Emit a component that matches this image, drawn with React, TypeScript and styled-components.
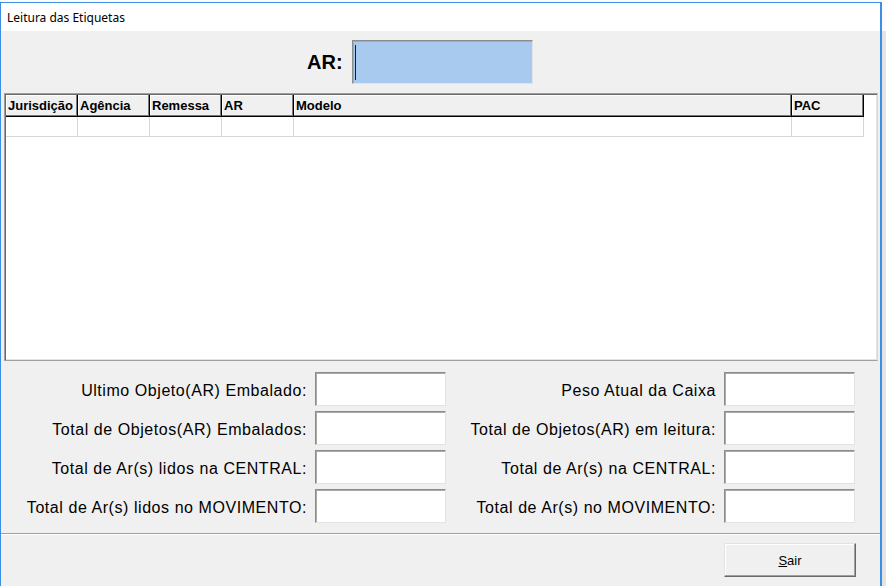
import React from 'react';
import styled, { createGlobalStyle } from 'styled-components';

const Global = createGlobalStyle`
  html, body { margin: 0; padding: 0; }
  body {
    width: 886px;
    height: 586px;
    overflow: hidden;
    background: linear-gradient(#fbfbfb 0 31px, #e4e4e4 31px);
    font-family: "Liberation Sans", Arial, sans-serif;
  }
`;

const Screen = styled.div`
  padding-top: 2px;
  height: 586px;
  box-sizing: border-box;
  overflow: hidden;
`;

const Window = styled.div`
  width: 882px;
  height: 600px;
  box-sizing: border-box;
  border-left: 1px solid #3c8fe0;
  border-top: 1px solid #3c8fe0;
  border-right: 2px solid #3c8fe0;
  background: #f0f0f0;
  display: flex;
  flex-direction: column;
`;

const TitleBar = styled.div`
  height: 28px;
  flex: none;
  background: #fff;
  display: flex;
  align-items: center;
  padding-left: 6px;
  font-family: "Noto Sans", sans-serif;
  font-size: 12px;
  color: #000;
`;

const ARRow = styled.div`
  height: 61px;
  flex: none;
  box-sizing: border-box;
  display: flex;
  align-items: flex-start;
  padding: 9px 0 0 306px;
`;

const ARLabel = styled.div`
  width: 37px;
  height: 43px;
  display: flex;
  align-items: center;
  white-space: nowrap;
  font-weight: bold;
  font-size: 20px;
  color: #000;
  margin-right: 8px;
  padding-top: 1px;
  box-sizing: border-box;
`;

const TextBox = styled.div<{ $bg?: string; $w: number; $h: number }>`
  width: ${(p) => p.$w}px;
  height: ${(p) => p.$h}px;
  box-sizing: border-box;
  background: ${(p) => p.$bg ?? '#fff'};
  border-style: solid;
  border-width: 1px;
  border-color: #8c8c8c #e3e3e3 #e3e3e3 #8c8c8c;
  box-shadow: inset 1px 1px 0 #a9a9a9;
  display: flex;
  align-items: center;
  padding-left: 2px;
`;

const Caret = styled.span`
  display: block;
  width: 1px;
  height: 35px;
  background: #1a1a1a;
`;

const Grid = styled.div`
  margin: 1px 2px 0 3px;
  height: 268px;
  flex: none;
  box-sizing: border-box;
  border-style: solid;
  border-width: 1px;
  border-color: #a0a0a0 #d8d8d8 #a0a0a0 #a0a0a0;
  box-shadow: inset 1px 1px 0 #696969, inset -1px -1px 0 #e3e3e3;
  background: #fff;
  padding: 1px;
  overflow: hidden;
`;

const GridRow = styled.div`
  display: flex;
`;

const HeadCell = styled.div<{ $w: number }>`
  width: ${(p) => p.$w}px;
  flex: none;
  height: 22px;
  box-sizing: border-box;
  background: #f0f0f0;
  border-right: 1px solid #000;
  border-bottom: 1px solid #000;
  box-shadow: inset -1px -1px 0 #7a7a7a, inset 1px 1px 0 #fff;
  font-weight: bold;
  font-size: 13px;
  line-height: 15px;
  padding: 3px 0 0 2px;
  color: #000;
  white-space: nowrap;
  overflow: hidden;
`;

const Cell = styled.div<{ $w: number }>`
  width: ${(p) => p.$w}px;
  flex: none;
  height: 20px;
  box-sizing: border-box;
  background: #fff;
  border-right: 1px solid #d6d6d6;
  border-bottom: 1px solid #d6d6d6;
`;

const FormPanel = styled.div`
  flex: none;
  display: grid;
  grid-template-columns: 306px 131px 262px 131px;
  grid-auto-rows: 34px;
  column-gap: 8px;
  row-gap: 5px;
  padding: 11px 0 10px 0;
`;

const FieldLabel = styled.div`
  align-self: center;
  text-align: right;
  white-space: nowrap;
  font-size: 16px;
  letter-spacing: 0.56px;
  color: #000;
  padding-top: 4px;
`;

const Etched = styled.div`
  flex: none;
  height: 1px;
  background: #a0a0a0;
  border-bottom: 1px solid #fff;
`;

const Footer = styled.div`
  flex: none;
  display: flex;
  justify-content: flex-end;
  padding: 8px 24px 0 0;
`;

const Button = styled.div`
  width: 132px;
  height: 34px;
  box-sizing: border-box;
  background: #f0f0f0;
  border-style: solid;
  border-width: 1px;
  border-color: #e3e3e3 #696969 #696969 #e3e3e3;
  box-shadow: inset -1px -1px 0 #a0a0a0, inset 1px 1px 0 #fff;
  display: flex;
  align-items: center;
  justify-content: center;
  font-size: 13px;
  color: #000;
`;

const Mnemonic = styled.span`
  text-decoration: underline;
`;

const columns: { title: string; w: number }[] = [
  { title: 'Jurisdição', w: 72 },
  { title: 'Agência', w: 72 },
  { title: 'Remessa', w: 72 },
  { title: 'AR', w: 72 },
  { title: 'Modelo', w: 498 },
  { title: 'PAC', w: 72 },
];

const fields: [string, string][] = [
  ['Ultimo Objeto(AR) Embalado:', 'Peso Atual da Caixa'],
  ['Total de Objetos(AR) Embalados:', 'Total de Objetos(AR) em leitura:'],
  ['Total de Ar(s) lidos na CENTRAL:', 'Total de Ar(s) na CENTRAL:'],
  ['Total de Ar(s) lidos no MOVIMENTO:', 'Total de Ar(s) no MOVIMENTO:'],
];

export default function App() {
  return (
    <>
      <Global />
      <Screen>
        <Window>
          <TitleBar>Leitura das Etiquetas</TitleBar>
          <ARRow>
            <ARLabel>AR:</ARLabel>
            <TextBox $bg="#a8caef" $w={181} $h={44}>
              <Caret />
            </TextBox>
          </ARRow>
          <Grid>
            <GridRow>
              {columns.map((c) => (
                <HeadCell key={c.title} $w={c.w}>
                  {c.title}
                </HeadCell>
              ))}
            </GridRow>
            <GridRow>
              {columns.map((c) => (
                <Cell key={c.title} $w={c.w} />
              ))}
            </GridRow>
          </Grid>
          <FormPanel>
            {fields.map(([l, r]) => (
              <React.Fragment key={l}>
                <FieldLabel>{l}</FieldLabel>
                <TextBox $w={131} $h={34} />
                <FieldLabel>{r}</FieldLabel>
                <TextBox $w={131} $h={34} />
              </React.Fragment>
            ))}
          </FormPanel>
          <Etched />
          <Footer>
            <Button>
              <span>
                <Mnemonic>S</Mnemonic>air
              </span>
            </Button>
          </Footer>
        </Window>
      </Screen>
    </>
  );
}
